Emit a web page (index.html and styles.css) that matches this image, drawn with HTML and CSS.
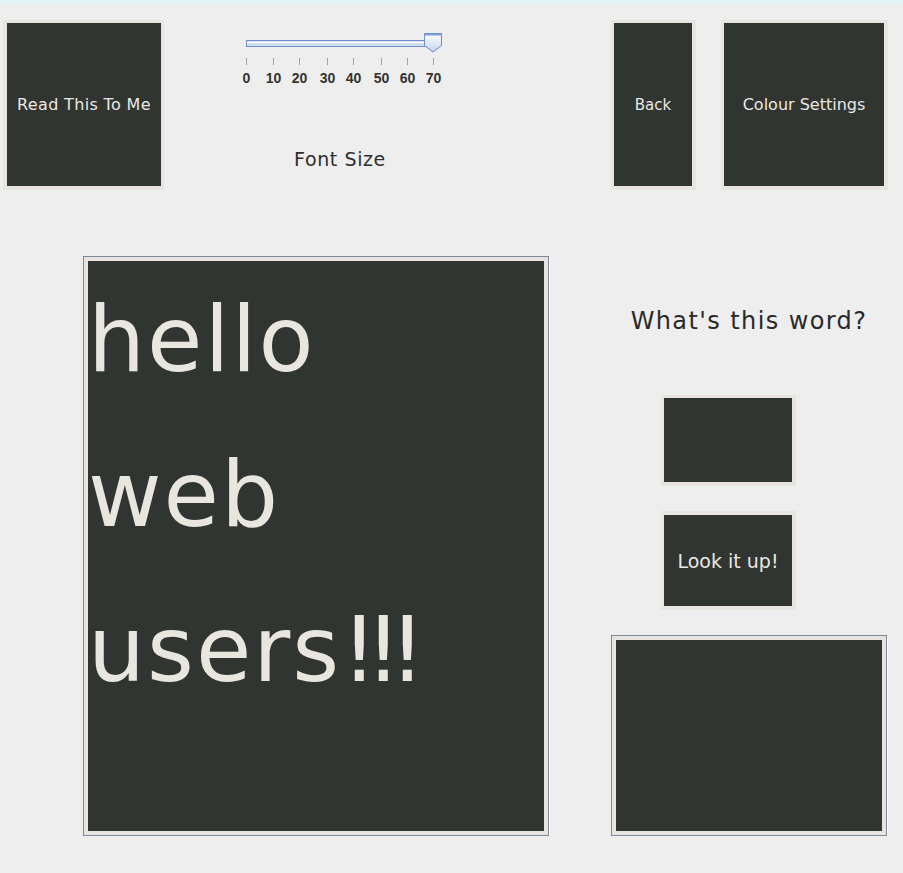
FILE: index.html
```html
<!DOCTYPE html>
<html>
<head>
<meta charset="utf-8">
<link rel="stylesheet" href="styles.css">
</head>
<body>
<div class="strip"></div>
<div class="top-row">
  <button class="btn btn-read">Read This To Me</button>
  <div class="slider-col">
    <svg class="slider" width="226" height="60" viewBox="0 0 226 60">
      <defs>
        <linearGradient id="thumbGrad" x1="0" y1="0" x2="0" y2="1">
          <stop offset="0" stop-color="#ffffff"/>
          <stop offset="1" stop-color="#c4d4ee"/>
        </linearGradient>
      </defs>
      <rect x="16.5" y="10.5" width="182" height="6" fill="#dbe4f4" stroke="#6d8cc8"/>
      <line x1="17" y1="12.5" x2="198" y2="12.5" stroke="#ffffff"/>
      <line x1="17" y1="14.5" x2="198" y2="14.5" stroke="#c9d6ee"/>
      <path d="M194.5 3.5 H211.5 V15.5 L203 22 L194.5 15.5 Z" fill="url(#thumbGrad)" stroke="#6d8cc8"/>
      <line x1="195" y1="4.5" x2="211" y2="4.5" stroke="#7f9cd3" stroke-width="2"/>
      <g stroke="#9aa4b2">
        <line x1="16.5" y1="28" x2="16.5" y2="35"/>
        <line x1="43.5" y1="28" x2="43.5" y2="35"/>
        <line x1="69.5" y1="28" x2="69.5" y2="35"/>
        <line x1="97.5" y1="28" x2="97.5" y2="35"/>
        <line x1="123.5" y1="28" x2="123.5" y2="35"/>
        <line x1="151.5" y1="28" x2="151.5" y2="35"/>
        <line x1="177.5" y1="28" x2="177.5" y2="35"/>
        <line x1="203.5" y1="28" x2="203.5" y2="35"/>
      </g>
      <g class="tick-labels" text-anchor="middle">
        <text x="16.5" y="53">0</text>
        <text x="43.5" y="53">10</text>
        <text x="69.5" y="53">20</text>
        <text x="97.5" y="53">30</text>
        <text x="123.5" y="53">40</text>
        <text x="151.5" y="53">50</text>
        <text x="177.5" y="53">60</text>
        <text x="203.5" y="53">70</text>
      </g>
    </svg>
    <div class="font-size-label">Font Size</div>
  </div>
  <button class="btn btn-back">Back</button>
  <button class="btn btn-colour">Colour Settings</button>
</div>
<div class="main-row">
  <div class="text-pane">
    <div class="text-inner">hello<br>web<br>users<span class="bangs">!!!</span></div>
  </div>
  <div class="side-col">
    <div class="question">What's this word?</div>
    <div class="word-box"></div>
    <button class="btn btn-lookup">Look it up!</button>
    <div class="def-pane"><div class="def-inner"></div></div>
  </div>
</div>
</body>
</html>
```
FILE: styles.css
```css
html, body {
  margin: 0;
  padding: 0;
  background: #eeeeee;
  font-family: "DejaVu Sans", sans-serif;
}

.strip {
  height: 4px;
  background: #e3f6f6;
}

.top-row {
  display: flex;
  align-items: flex-start;
  margin-top: 16px;
}

.btn {
  box-sizing: border-box;
  display: flex;
  align-items: center;
  justify-content: center;
  margin: 0;
  padding: 0;
  background: #313531;
  color: #ebe7e2;
  border-style: solid;
  border-color: #e8e4df;
  border-width: 3px 4px 4px 3px;
  font-family: "DejaVu Sans", sans-serif;
  font-size: 16px;
  white-space: nowrap;
}

.btn-read {
  margin-left: 3px;
  width: 161px;
  height: 170px;
  border-width: 3px 3px 4px 4px;
  letter-spacing: 0.35px;
}

.slider-col {
  margin-left: 66px;
  width: 226px;
  padding-top: 10px;
  display: flex;
  flex-direction: column;
}

.slider {
  display: block;
}

.tick-labels {
  font-family: "Liberation Sans", Arial, sans-serif;
  font-weight: bold;
  font-size: 14px;
  fill: #333333;
}

.font-size-label {
  margin-top: 58px;
  margin-right: 6px;
  text-align: center;
  font-size: 19px;
  line-height: 22px;
  letter-spacing: 0.6px;
  color: #2e2e2e;
}

.btn-back {
  margin-left: 155px;
  width: 85px;
  height: 170px;
  font-size: 15px;
}

.btn-colour {
  margin-left: 25px;
  width: 167px;
  height: 170px;
}

.main-row {
  display: flex;
  align-items: flex-start;
  margin-top: 66px;
}

.text-pane {
  box-sizing: border-box;
  margin-left: 83px;
  width: 466px;
  height: 580px;
  border: 1px solid #7b8898;
  box-shadow: 1px 1px 0 #ffffff;
  padding: 4px;
  background: #e8e4df;
}

.text-inner {
  box-sizing: border-box;
  height: 100%;
  background: #313531;
  color: #e9e5df;
  font-size: 90px;
  line-height: 155px;
  letter-spacing: 2px;
  padding-top: 1px;
}

.bangs {
  letter-spacing: -12px;
}

.side-col {
  margin-left: 62px;
  width: 276px;
  display: flex;
  flex-direction: column;
}

.question {
  margin-top: 51px;
  text-align: center;
  font-size: 24px;
  line-height: 28px;
  letter-spacing: 1.4px;
  color: #2a2a2a;
}

.word-box {
  box-sizing: border-box;
  margin-top: 60px;
  margin-left: 50px;
  width: 135px;
  height: 91px;
  background: #313531;
  border-style: solid;
  border-color: #e8e4df;
  border-width: 3px 4px 4px 3px;
}

.btn-lookup {
  margin-top: 25px;
  margin-left: 50px;
  width: 135px;
  height: 99px;
  border-width: 4px 4px 4px 3px;
  font-size: 19px;
}

.def-pane {
  box-sizing: border-box;
  margin-top: 25px;
  width: 276px;
  height: 201px;
  border: 1px solid #7b8898;
  box-shadow: 1px 1px 0 #ffffff;
  padding: 4px;
  background: #e8e4df;
}

.def-inner {
  height: 100%;
  background: #313531;
}
```
